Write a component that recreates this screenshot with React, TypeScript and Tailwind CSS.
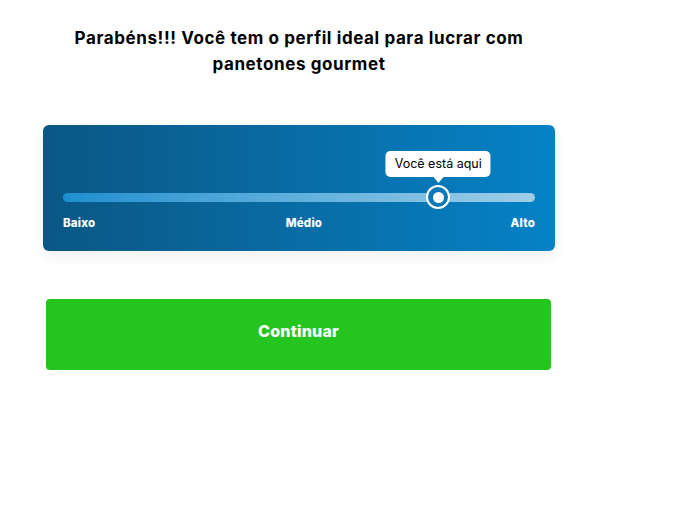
import React from 'react';

const App = () => {
  const position = 79.5; // percent along the track

  return (
    <div className="min-h-[518px] w-[690px] bg-white" style={{ fontFamily: 'Inter, "Noto Sans", sans-serif' }}>
      <div className="flex w-[512px] flex-col ml-[43px]">
        <h1 className="pt-[25px] text-center text-[17px] font-bold leading-[26px] text-black tracking-[0.6px]">
          Parabéns!!! Você tem o perfil ideal para lucrar com
          <br />
          panetones gourmet
        </h1>

        <div className="mt-[48px] h-[126px] rounded-[6px] bg-gradient-to-r from-[#0a5784] to-[#0582c7] px-5 pt-[28px] shadow-[0_6px_14px_rgba(0,0,0,0.06)]">
          <div className="relative h-[50px]">
            <div className="absolute left-0 right-0 top-[40px] h-[9px] rounded-full bg-gradient-to-r from-[#1b8fd0] via-[#5fb0dc] to-[#9fcde8]" />
            <div
              className="absolute top-[32px] flex h-[24px] w-[24px] -translate-x-1/2 items-center justify-center rounded-full border-[2.5px] border-white bg-[#0b79b8]"
              style={{ left: `${position}%` }}
            >
              <div className="h-[11px] w-[11px] rounded-full bg-white" />
            </div>
            <div
              className="absolute top-0 flex -translate-x-1/2 flex-col items-center"
              style={{ left: `${position}%` }}
            >
              <div className="-mt-[2px] rounded-[5px] bg-white px-[9px] py-[5px] text-[12.5px] leading-[16px] text-black whitespace-nowrap">
                Você está aqui
              </div>
              <div className="h-0 w-0 border-x-[5px] border-t-[6px] border-x-transparent border-t-white" />
            </div>
          </div>
          <div className="flex justify-between pt-[13px] text-[11.5px] font-extrabold leading-[14px] text-white tracking-[0.2px]">
            <span>Baixo</span>
            <span className="pl-[2px]">Médio</span>
            <span>Alto</span>
          </div>
        </div>

        <button className="mt-[48px] ml-[3px] flex h-[71px] w-[505px] items-center justify-center rounded-[4px] bg-[#24c51f] pb-[8px] text-[16px] font-extrabold text-white tracking-[0.2px]">
          Continuar
        </button>
      </div>
    </div>
  );
};

export default App;
